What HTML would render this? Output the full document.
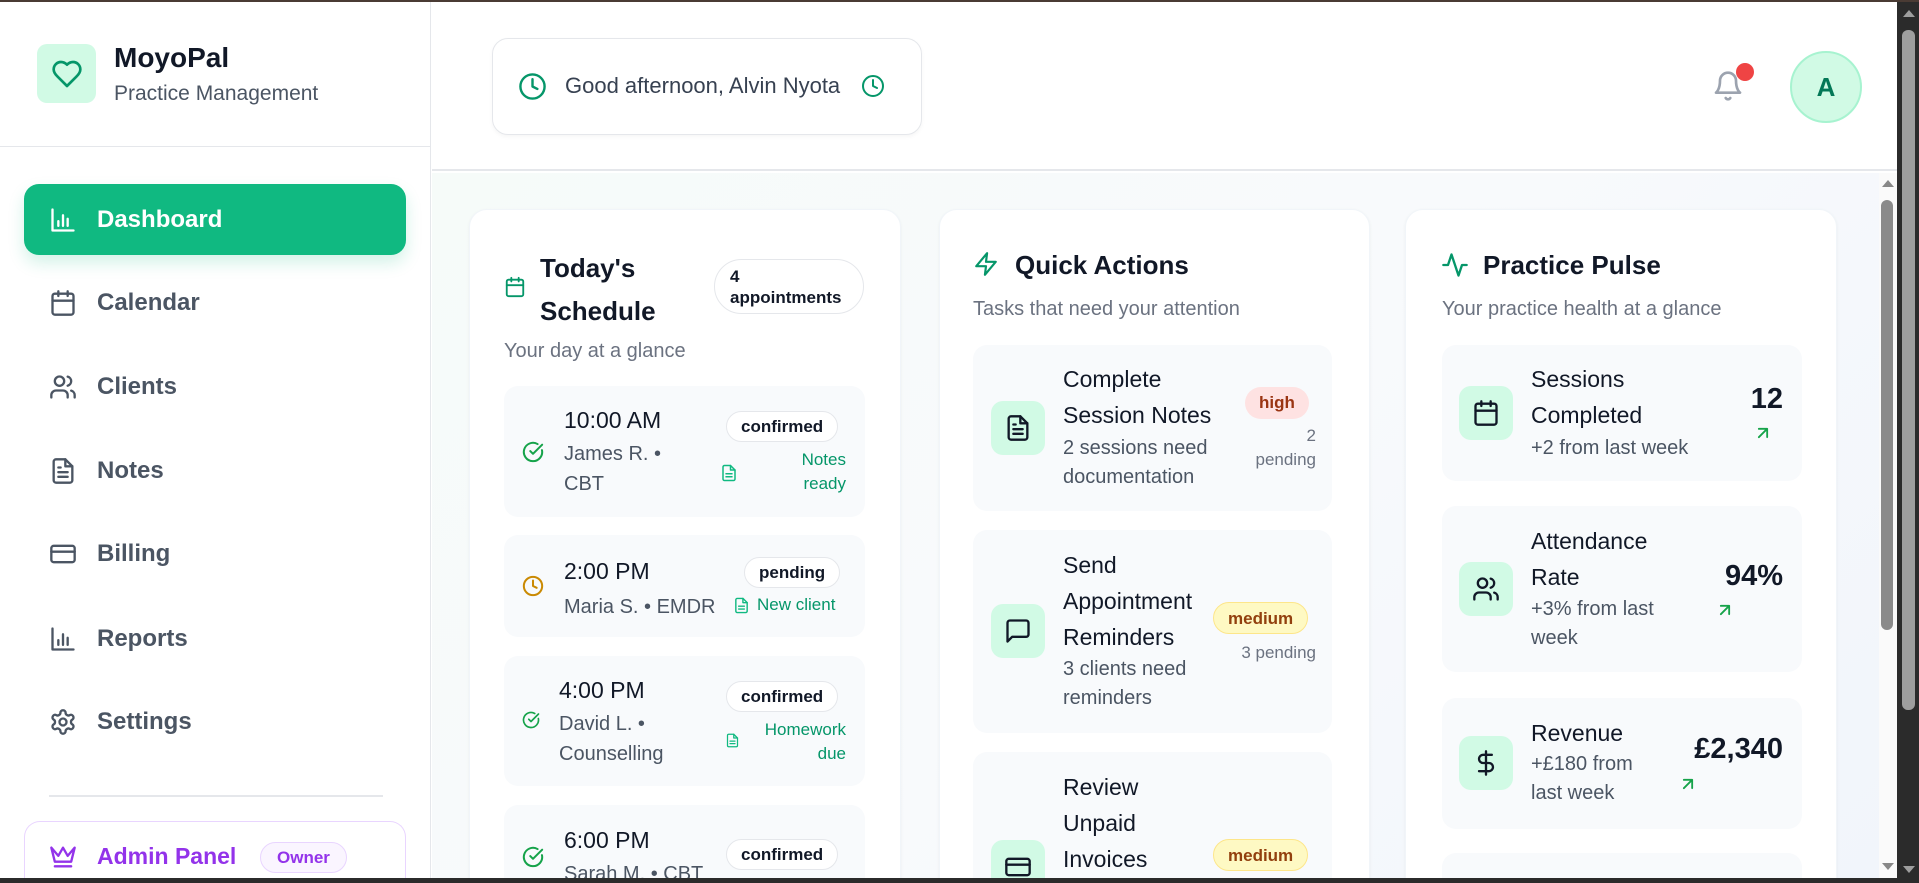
<!DOCTYPE html>
<html><head><meta charset="utf-8"><style>
*{box-sizing:border-box;margin:0;padding:0}
html,body{width:1919px;height:883px;overflow:hidden}
body{font-family:"Liberation Sans",sans-serif;background:#fff;color:#111827}
#root{position:relative;width:1919px;height:883px;overflow:hidden}
.a{position:absolute}
svg{fill:none;stroke-linecap:round;stroke-linejoin:round}
.nav{position:absolute;left:24px;width:382px;height:71px;display:flex;align-items:center;padding-left:25px;font-size:24px;font-weight:600;color:#4b5563}
.nav svg{width:28px;height:28px;stroke:#4b5563;stroke-width:2;margin-right:20px}
.card{position:absolute;top:209px;height:700px;background:#fff;border-radius:18px;box-shadow:0 1px 3px rgba(0,0,0,.05);border:1px solid #f1f5f9}
.item{position:absolute;background:#f8fafc;border-radius:14px}
.t{font-size:23px;font-weight:500;color:#111827}
.g{font-size:20px;color:#4b5563;line-height:30px}
.pill{position:absolute;border:1px solid #e5e7eb;border-radius:16px;background:#fff;font-size:17px;font-weight:700;padding:0 14px;height:31px;line-height:29px;color:#111827}
.green{color:#059669}
.ib{position:absolute;width:54px;height:54px;border-radius:12px;background:#d1fae5;display:flex;align-items:center;justify-content:center}
.ib svg{width:28px;height:28px;stroke:#111827;stroke-width:2}
.qt{position:absolute;font-size:23px;line-height:36px;color:#111827}
.qd{position:absolute;font-size:20px;line-height:29px;color:#4b5563}
.bad{position:absolute;border-radius:16px;font-size:17px;font-weight:700;height:32px;line-height:32px;padding:0 14px;color:#92400e}
.pend{position:absolute;font-size:17px;color:#6b7280;text-align:right;line-height:24px}
.val{position:absolute;font-size:29px;font-weight:700;color:#111827;text-align:right}
</style></head><body><div id="root">
<div class="a" style="left:0;top:0;width:1919px;height:2px;background:#4a3b34"></div>
<div class="a" style="left:0;top:2px;width:431px;height:881px;border-right:1px solid #e5e7eb;background:#fff"></div>
<div class="a" style="left:37px;top:44px;width:59px;height:59px;border-radius:10px;background:#d1fae5;display:flex;align-items:center;justify-content:center">
<svg width="32" height="32" viewBox="0 0 24 24" style="stroke:#059669;stroke-width:2"><path d="M19 14c1.49-1.46 3-3.21 3-5.5A5.5 5.5 0 0 0 16.5 3c-1.76 0-3 .5-4.5 2-1.5-1.5-2.740-2-4.5-2A5.5 5.5 0 0 0 2 8.5c0 2.3 1.5 4.05 3 5.5l7 7Z"/></svg></div>
<div class="a" style="left:114px;top:42px;font-size:28px;font-weight:700">MoyoPal</div>
<div class="a" style="left:114px;top:82px;font-size:21px;color:#4b5563">Practice Management</div>
<div class="a" style="left:0;top:146px;width:431px;height:1px;background:#e5e7eb"></div>
<div class="nav" style="top:184px;background:#10b981;color:#fff;border-radius:15px;box-shadow:0 8px 16px rgba(16,185,129,.18)"><svg viewBox="0 0 24 24" style="stroke:#fff"><path d="M3 3v18h18M8 17v-4M12 17V8M16 17v-6"/></svg>Dashboard</div>
<div class="nav" style="top:267px"><svg viewBox="0 0 24 24"><rect x="3" y="4" width="18" height="18" rx="2"/><path d="M16 2v4M8 2v4M3 10h18"/></svg>Calendar</div>
<div class="nav" style="top:351px"><svg viewBox="0 0 24 24"><path d="M16 21v-2a4 4 0 0 0-4-4H6a4 4 0 0 0-4 4v2"/><circle cx="9" cy="7" r="4"/><path d="M22 21v-2a4 4 0 0 0-3-3.87M16 3.13a4 4 0 0 1 0 7.75"/></svg>Clients</div>
<div class="nav" style="top:435px"><svg viewBox="0 0 24 24"><path d="M14 2H6a2 2 0 0 0-2 2v16a2 2 0 0 0 2 2h12a2 2 0 0 0 2-2V8z"/><path d="M14 2v6h6M16 13H8M16 17H8M10 9H8"/></svg>Notes</div>
<div class="nav" style="top:518px"><svg viewBox="0 0 24 24"><rect x="2" y="5" width="20" height="14" rx="2"/><path d="M2 10h20"/></svg>Billing</div>
<div class="nav" style="top:603px"><svg viewBox="0 0 24 24"><path d="M3 3v18h18M8 17v-4M12 17V8M16 17v-6"/></svg>Reports</div>
<div class="nav" style="top:686px"><svg viewBox="0 0 24 24"><path d="M12.22 2h-.44a2 2 0 0 0-2 2v.18a2 2 0 0 1-1 1.73l-.43.25a2 2 0 0 1-2 0l-.15-.08a2 2 0 0 0-2.73.73l-.22.38a2 2 0 0 0 .73 2.73l.15.1a2 2 0 0 1 1 1.72v.51a2 2 0 0 1-1 1.74l-.15.09a2 2 0 0 0-.73 2.73l.22.38a2 2 0 0 0 2.73.73l.15-.08a2 2 0 0 1 2 0l.43.25a2 2 0 0 1 1 1.73V20a2 2 0 0 0 2 2h.44a2 2 0 0 0 2-2v-.18a2 2 0 0 1 1-1.73l.43-.25a2 2 0 0 1 2 0l.15.08a2 2 0 0 0 2.73-.73l.22-.39a2 2 0 0 0-.73-2.73l-.15-.08a2 2 0 0 1-1-1.74v-.5a2 2 0 0 1 1-1.74l.15-.09a2 2 0 0 0 .73-2.73l-.22-.38a2 2 0 0 0-2.73-.73l-.15.08a2 2 0 0 1-2 0l-.43-.25a2 2 0 0 1-1-1.73V4a2 2 0 0 0-2-2z"/><circle cx="12" cy="12" r="3"/></svg>Settings</div>
<div class="a" style="left:49px;top:795px;width:334px;height:2px;background:#e5e7eb"></div>
<div class="a" style="left:24px;top:821px;width:382px;height:57px;border:1px solid #e9d5ff;border-bottom:none;border-radius:16px 16px 0 0"></div>
<svg class="a" style="left:49px;top:843px;stroke:#9333ea;stroke-width:2" width="28" height="28" viewBox="0 0 24 24"><path d="M2 4l3 12h14l3-12-6 7-4-7-4 7-6-7zM5 20h14"/></svg>
<div class="a" style="left:97px;top:843px;font-size:23px;font-weight:600;color:#9333ea">Admin Panel</div>
<div class="a" style="left:260px;top:842px;height:31px;padding:0 16px;border:1px solid #e9d5ff;background:#faf5ff;border-radius:16px;font-size:17px;font-weight:700;color:#9333ea;line-height:29px">Owner</div>
<div class="a" style="left:432px;top:2px;width:1465px;height:169px;background:#fff;border-bottom:2px solid #e5e7eb"></div>
<div class="a" style="left:492px;top:38px;width:430px;height:97px;border:1px solid #e5e7eb;border-radius:16px;box-shadow:0 2px 4px rgba(0,0,0,.04)"></div>
<svg class="a" style="left:518px;top:72px;stroke:#059669;stroke-width:2" width="29" height="29" viewBox="0 0 24 24"><circle cx="12" cy="12" r="10"/><path d="M12 6v6l4 2"/></svg>
<div class="a" style="left:565px;top:73px;font-size:22px;color:#374151">Good afternoon, Alvin Nyota</div>
<svg class="a" style="left:861px;top:74px;stroke:#059669;stroke-width:2" width="24" height="24" viewBox="0 0 24 24"><circle cx="12" cy="12" r="10"/><path d="M12 6v6l4 2"/></svg>
<svg class="a" style="left:1712px;top:68px;stroke:#9ca3af;stroke-width:2" width="32" height="36" viewBox="0 0 24 24"><path d="M6 8a6 6 0 0 1 12 0c0 7 3 9 3 9H3s3-2 3-9M10.3 21a1.94 1.94 0 0 0 3.4 0"/></svg>
<div class="a" style="left:1736px;top:63px;width:18px;height:18px;border-radius:50%;background:#ef4444"></div>
<div class="a" style="left:1790px;top:51px;width:72px;height:72px;border-radius:50%;background:#d1fae5;border:2px solid #a7f3d0;display:flex;align-items:center;justify-content:center;font-size:26px;font-weight:700;color:#047857">A</div>
<div class="a" style="left:432px;top:173px;width:1447px;height:705px;overflow:hidden;background:linear-gradient(135deg,#f6fbf9,#f8fafc 50%,#f1f5fb)">
<div style="position:absolute;left:-432px;top:-173px;width:1919px;height:883px">
<div class="card" style="left:469px;width:432px"></div>
<svg class="a" style="left:504px;top:276px;stroke:#059669;stroke-width:2" width="22" height="22" viewBox="0 0 24 24"><rect x="3" y="4" width="18" height="18" rx="2"/><path d="M16 2v4M8 2v4M3 10h18"/></svg>
<div class="a" style="left:540px;top:247px;font-size:26px;font-weight:700;line-height:43px">Today's<br>Schedule</div>
<div class="a" style="left:714px;top:259px;width:150px;height:55px;border:1px solid #e5e7eb;border-radius:28px;background:#fff;padding:6px 0 0 15px;font-size:17px;font-weight:700;line-height:21px">4<br>appointments</div>
<div class="a" style="left:504px;top:340px;font-size:20px;color:#6b7280">Your day at a glance</div>
<div class="item" style="left:504px;top:386px;width:361px;height:131px"></div>
<svg class="a" style="left:522px;top:441px;stroke:#16a34a;stroke-width:2.2" width="22" height="22" viewBox="0 0 24 24"><path d="M21.8 10A10 10 0 1 1 17 3.34"/><path d="m9 11 3 3L22 4"/></svg>
<div class="a t" style="left:564px;top:407px">10:00 AM</div>
<div class="a g" style="left:564px;top:439px">James R. •<br>CBT</div>
<div class="pill" style="left:726px;top:411px">confirmed</div>
<svg class="a" style="left:720px;top:464px;stroke:#10b981;stroke-width:2" width="18" height="18" viewBox="0 0 24 24"><path d="M14 2H6a2 2 0 0 0-2 2v16a2 2 0 0 0 2 2h12a2 2 0 0 0 2-2V8z"/><path d="M14 2v6h6M16 13H8M16 17H8"/></svg>
<div class="a green" style="left:760px;top:448px;width:86px;text-align:right;font-size:17px;line-height:24px">Notes<br>ready</div>
<div class="item" style="left:504px;top:535px;width:361px;height:102px"></div>
<svg class="a" style="left:522px;top:575px;stroke:#ca8a04;stroke-width:2.2" width="22" height="22" viewBox="0 0 24 24"><circle cx="12" cy="12" r="10"/><path d="M12 6v6l4 2"/></svg>
<div class="a t" style="left:564px;top:558px">2:00 PM</div>
<div class="a g" style="left:564px;top:592px">Maria S. • EMDR</div>
<div class="pill" style="left:744px;top:557px">pending</div>
<svg class="a" style="left:733px;top:597px;stroke:#10b981;stroke-width:2" width="17" height="17" viewBox="0 0 24 24"><path d="M14 2H6a2 2 0 0 0-2 2v16a2 2 0 0 0 2 2h12a2 2 0 0 0 2-2V8z"/><path d="M14 2v6h6M16 13H8M16 17H8"/></svg>
<div class="a green" style="left:757px;top:595px;font-size:17px">New client</div>
<div class="item" style="left:504px;top:656px;width:361px;height:130px"></div>
<svg class="a" style="left:522px;top:711px;stroke:#16a34a;stroke-width:2.2" width="18" height="18" viewBox="0 0 24 24"><path d="M21.8 10A10 10 0 1 1 17 3.34"/><path d="m9 11 3 3L22 4"/></svg>
<div class="a t" style="left:559px;top:677px">4:00 PM</div>
<div class="a g" style="left:559px;top:709px">David L. •<br>Counselling</div>
<div class="pill" style="left:726px;top:681px">confirmed</div>
<svg class="a" style="left:725px;top:733px;stroke:#10b981;stroke-width:2" width="15" height="15" viewBox="0 0 24 24"><path d="M14 2H6a2 2 0 0 0-2 2v16a2 2 0 0 0 2 2h12a2 2 0 0 0 2-2V8z"/><path d="M14 2v6h6M16 13H8M16 17H8"/></svg>
<div class="a green" style="left:740px;top:718px;width:106px;text-align:right;font-size:17px;line-height:24px">Homework<br>due</div>
<div class="item" style="left:504px;top:805px;width:361px;height:120px"></div>
<svg class="a" style="left:522px;top:846px;stroke:#16a34a;stroke-width:2.2" width="22" height="22" viewBox="0 0 24 24"><path d="M21.8 10A10 10 0 1 1 17 3.34"/><path d="m9 11 3 3L22 4"/></svg>
<div class="a t" style="left:564px;top:827px">6:00 PM</div>
<div class="a g" style="left:564px;top:859px">Sarah M. • CBT</div>
<div class="pill" style="left:726px;top:839px">confirmed</div>
<div class="card" style="left:939px;width:431px"></div>
<svg class="a" style="left:973px;top:251px;stroke:#059669;stroke-width:2" width="26" height="26" viewBox="0 0 24 24"><path d="M13 2 3 14h9l-1 8 10-12h-9l1-8z"/></svg>
<div class="a" style="left:1015px;top:250px;font-size:26px;font-weight:700">Quick Actions</div>
<div class="a" style="left:973px;top:298px;font-size:20px;color:#6b7280">Tasks that need your attention</div>
<div class="item" style="left:973px;top:345px;width:359px;height:166px"></div>
<div class="ib" style="left:991px;top:401px"><svg viewBox="0 0 24 24"><path d="M14 2H6a2 2 0 0 0-2 2v16a2 2 0 0 0 2 2h12a2 2 0 0 0 2-2V8z"/><path d="M14 2v6h6M16 13H8M16 17H8M10 9H8"/></svg></div>
<div class="qt" style="left:1063px;top:361px">Complete<br>Session Notes</div>
<div class="qd" style="left:1063px;top:434px">2 sessions need<br>documentation</div>
<div class="bad" style="left:1245px;top:387px;background:#fee2e2;color:#9a3412">high</div>
<div class="pend" style="left:1230px;top:424px;width:86px">2<br>pending</div>
<div class="item" style="left:973px;top:530px;width:359px;height:203px"></div>
<div class="ib" style="left:991px;top:604px"><svg viewBox="0 0 24 24"><path d="M21 15a2 2 0 0 1-2 2H7l-4 4V5a2 2 0 0 1 2-2h14a2 2 0 0 1 2 2z"/></svg></div>
<div class="qt" style="left:1063px;top:547px">Send<br>Appointment<br>Reminders</div>
<div class="qd" style="left:1063px;top:655px">3 clients need<br>reminders</div>
<div class="bad" style="left:1213px;top:602px;background:#fef9c3;border:1px solid #fde68a">medium</div>
<div class="pend" style="left:1200px;top:641px;width:116px">3 pending</div>
<div class="item" style="left:973px;top:752px;width:359px;height:200px"></div>
<div class="ib" style="left:991px;top:840px"><svg viewBox="0 0 24 24"><rect x="2" y="5" width="20" height="14" rx="2"/><path d="M2 10h20"/></svg></div>
<div class="qt" style="left:1063px;top:769px">Review<br>Unpaid<br>Invoices</div>
<div class="bad" style="left:1213px;top:839px;background:#fef9c3;border:1px solid #fde68a">medium</div>
<div class="card" style="left:1405px;width:432px"></div>
<svg class="a" style="left:1441px;top:251px;stroke:#059669;stroke-width:2" width="28" height="28" viewBox="0 0 24 24"><path d="M22 12h-4l-3 9L9 3l-3 9H2"/></svg>
<div class="a" style="left:1483px;top:250px;font-size:26px;font-weight:700">Practice Pulse</div>
<div class="a" style="left:1442px;top:298px;font-size:20px;color:#6b7280">Your practice health at a glance</div>
<div class="item" style="left:1442px;top:345px;width:360px;height:136px"></div>
<div class="ib" style="left:1459px;top:386px"><svg viewBox="0 0 24 24"><rect x="3" y="4" width="18" height="18" rx="2"/><path d="M16 2v4M8 2v4M3 10h18"/></svg></div>
<div class="qt" style="left:1531px;top:361px">Sessions<br>Completed</div>
<div class="qd" style="left:1531px;top:434px">+2 from last week</div>
<div class="val" style="left:1700px;top:383px;width:83px">12</div>
<svg class="a" style="left:1753px;top:423px;stroke:#16a34a;stroke-width:2.2" width="20" height="20" viewBox="0 0 24 24"><path d="M7 17 17 7M7 7h10v10"/></svg>
<div class="item" style="left:1442px;top:506px;width:360px;height:166px"></div>
<div class="ib" style="left:1459px;top:562px"><svg viewBox="0 0 24 24"><path d="M16 21v-2a4 4 0 0 0-4-4H6a4 4 0 0 0-4 4v2"/><circle cx="9" cy="7" r="4"/><path d="M22 21v-2a4 4 0 0 0-3-3.87M16 3.13a4 4 0 0 1 0 7.75"/></svg></div>
<div class="qt" style="left:1531px;top:523px">Attendance<br>Rate</div>
<div class="qd" style="left:1531px;top:595px">+3% from last<br>week</div>
<div class="val" style="left:1680px;top:560px;width:103px">94%</div>
<svg class="a" style="left:1715px;top:600px;stroke:#16a34a;stroke-width:2.2" width="20" height="20" viewBox="0 0 24 24"><path d="M7 17 17 7M7 7h10v10"/></svg>
<div class="item" style="left:1442px;top:698px;width:360px;height:131px"></div>
<div class="ib" style="left:1459px;top:736px"><svg viewBox="0 0 24 24"><path d="M12 2v20M17 5H9.5a3.5 3.5 0 0 0 0 7h5a3.5 3.5 0 0 1 0 7H6"/></svg></div>
<div class="qt" style="left:1531px;top:715px">Revenue</div>
<div class="qd" style="left:1531px;top:750px">+£180 from<br>last week</div>
<div class="val" style="left:1620px;top:733px;width:163px">£2,340</div>
<svg class="a" style="left:1678px;top:774px;stroke:#16a34a;stroke-width:2.2" width="20" height="20" viewBox="0 0 24 24"><path d="M7 17 17 7M7 7h10v10"/></svg>
<div class="item" style="left:1442px;top:853px;width:360px;height:100px"></div>
</div></div>
<div class="a" style="left:1879px;top:173px;width:18px;height:705px;background:#fafafa"></div>
<div class="a" style="left:1882px;top:180px;width:0;height:0;border-left:6px solid transparent;border-right:6px solid transparent;border-bottom:7px solid #888"></div>
<div class="a" style="left:1881px;top:200px;width:12px;height:430px;border-radius:6px;background:#8a8a8a"></div>
<div class="a" style="left:1882px;top:863px;width:0;height:0;border-left:6px solid transparent;border-right:6px solid transparent;border-top:7px solid #888"></div>
<div class="a" style="left:1897px;top:2px;width:22px;height:881px;background:#2b2b2b"></div>
<div class="a" style="left:1903px;top:10px;width:0;height:0;border-left:6px solid transparent;border-right:6px solid transparent;border-bottom:7px solid #9e9e9e"></div>
<div class="a" style="left:1902px;top:30px;width:13px;height:680px;border-radius:6px;background:#9e9e9e"></div>
<div class="a" style="left:1903px;top:866px;width:0;height:0;border-left:6px solid transparent;border-right:6px solid transparent;border-top:7px solid #9e9e9e"></div>
<div class="a" style="left:0;top:878px;width:1919px;height:5px;background:#2b2b2b"></div>
</div></body></html>
